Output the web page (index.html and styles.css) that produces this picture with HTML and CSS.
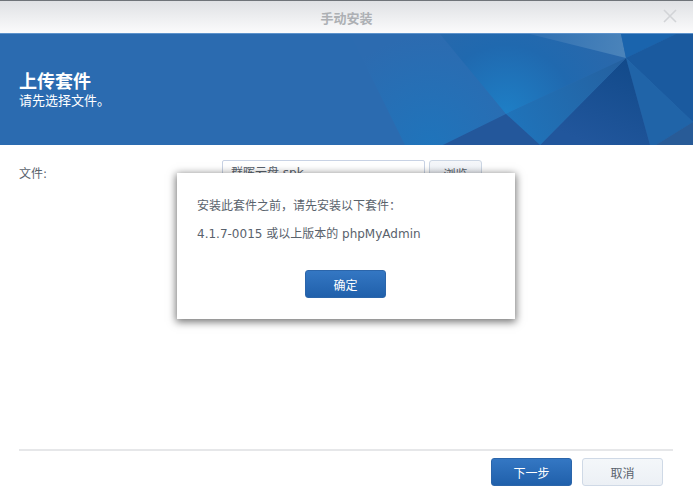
FILE: index.html
```html
<!DOCTYPE html>
<html lang="zh-CN">
<head>
<meta charset="utf-8">
<title>手动安装</title>
<link rel="stylesheet" href="styles.css">
</head>
<body>
<div class="window">
  <header class="titlebar">
    <span class="title">手动安装</span>
    <svg class="close" width="14" height="14" viewBox="0 0 14 14"><path d="M1 1 13 13M13 1 1 13" stroke="#d2d4d7" stroke-width="1.6" fill="none"/></svg>
  </header>
  <section class="banner">
    <svg class="facets" width="693" height="111" viewBox="0 0 693 111">
      <defs>
        <radialGradient id="gMain" gradientUnits="userSpaceOnUse" cx="506" cy="80" r="125"><stop offset="0" stop-color="#1e7fc6"/><stop offset="0.55" stop-color="#2069af"/><stop offset="1" stop-color="#2a68ab"/></radialGradient>
        <radialGradient id="gLeft" gradientUnits="userSpaceOnUse" cx="430" cy="111" r="110"><stop offset="0" stop-color="#1f74bb"/><stop offset="1" stop-color="#2c6bb0"/></radialGradient>
        <linearGradient id="gWedge" gradientUnits="userSpaceOnUse" x1="626" y1="24" x2="506" y2="90"><stop offset="0" stop-color="#25609f"/><stop offset="1" stop-color="#1f74bb"/></linearGradient>
        <linearGradient id="gDark" gradientUnits="userSpaceOnUse" x1="626" y1="24" x2="590" y2="110"><stop offset="0" stop-color="#124a8a"/><stop offset="1" stop-color="#21569c"/></linearGradient>
        <linearGradient id="gSheen" gradientUnits="userSpaceOnUse" x1="530" y1="0" x2="622" y2="20"><stop offset="0" stop-color="#2f70b2"/><stop offset="1" stop-color="#4a83ba"/></linearGradient>
      </defs>
      <polygon points="350,0 440,0 506,80 443,111 405,111" fill="url(#gLeft)"/>
      <polygon points="440,0 530,0 626,24 506,80" fill="url(#gMain)"/>
      <polygon points="530,0 621,0 626,24" fill="url(#gSheen)"/>
      <polygon points="621,0 676,0 626,24" fill="#1a64ad"/>
      <polygon points="676,0 693,0 693,88 626,24" fill="#1a5a9f"/>
      <polygon points="626,24 693,88 656,111 650,111" fill="#2064a8"/>
      <polygon points="693,88 693,111 656,111" fill="#285b97"/>
      <polygon points="626,24 650,111 540,111" fill="url(#gDark)"/>
      <polygon points="506,80 626,24 540,111" fill="url(#gWedge)"/>
      <polygon points="506,80 540,111 443,111" fill="#23579b"/>
    </svg>
    <h1 class="banner-title">上传套件</h1>
    <p class="banner-sub">请先选择文件。</p>
  </section>
  <main class="content">
    <div class="file-row">
      <label class="file-label">文件:</label>
      <div class="file-input">群晖云盘.spk</div>
      <button class="browse">浏览</button>
    </div>
  </main>
  <footer class="footer">
    <button class="btn primary">下一步</button>
    <button class="btn cancel">取消</button>
  </footer>
</div>
<div class="dialog">
  <p class="msg first">安装此套件之前，请先安装以下套件：</p>
  <p class="msg">4.1.7-0015 或以上版本的 phpMyAdmin</p>
  <div class="dialog-actions"><button class="btn primary">确定</button></div>
</div>
</body>
</html>
```
FILE: styles.css
```css
* { box-sizing: border-box; }
html, body { margin: 0; height: 100%; }
body { background: #fff; font-family: "DejaVu Sans", "Noto Sans CJK SC", sans-serif; color: #59626c; overflow: hidden; }
.window { display: flex; flex-direction: column; width: 693px; height: 490px; }
.titlebar { height: 33px; flex: none; position: relative; display: flex; align-items: center; justify-content: center; border-top: 1px solid #6f7479; background: linear-gradient(#dfe1e4, #fbfbfc); }
.title { font-size: 13px; color: #adb0b4; font-weight: 700; }
.close { position: absolute; left: 663px; top: 8px; }
.banner { height: 112px; flex: none; position: relative; background: #2b6bb0; border-top: 1px solid #5d93cc; padding: 38px 0 0 19px; color: #fff; }
.facets { position: absolute; left: 0; top: 0; }
.banner-title, .banner-sub { position: relative; margin: 0; }
.banner-title { font-size: 18px; line-height: 20px; font-weight: 700; }
.banner-sub { font-size: 13px; line-height: 15px; margin-top: 1px; }
.content { flex: 1; padding: 15px 19px 0; }
.file-row { display: flex; align-items: flex-start; }
.file-label { width: 203px; font-size: 12px; line-height: 28px; }
.file-input { width: 203px; height: 28px; border: 1px solid #c8d2e4; border-radius: 2px; padding: 0 8px; font-size: 12px; line-height: 24px; }
.browse { margin-left: 4px; width: 53px; height: 28px; border: 1px solid #ccd6e4; border-radius: 3px; background: linear-gradient(#f5f7fa, #e9eef5); font: 12px "DejaVu Sans", "Noto Sans CJK SC", sans-serif; color: #59626c; padding: 0 0 2px; }
.footer { height: 41px; flex: none; margin: 0 20px 0 19px; border-top: 2px solid #e6e7e9; display: flex; justify-content: flex-end; gap: 10px; padding: 7px 10px 0 0; }
.btn { width: 81px; height: 28px; border-radius: 3px; font: 12px "DejaVu Sans", "Noto Sans CJK SC", sans-serif; padding: 0; }
.primary { background: linear-gradient(#3477c3, #2060ab); border: 1px solid #2b65aa; color: #fff; }
.cancel { background: linear-gradient(#f4f7fa, #ecf0f5); border: 1px solid #cfd9e6; color: #59626c; }
.dialog { position: absolute; left: 177px; top: 173px; width: 338px; height: 146px; background: #fff; box-shadow: 0 2px 8px 1px rgba(0,0,0,.55); padding: 25px 20px 0; font-size: 12px; }
.msg { margin: 0; line-height: 16px; }
.msg.first { margin-bottom: 12px; }
.dialog-actions { display: flex; justify-content: center; margin-top: 28px; padding-right: 1px; }
```
